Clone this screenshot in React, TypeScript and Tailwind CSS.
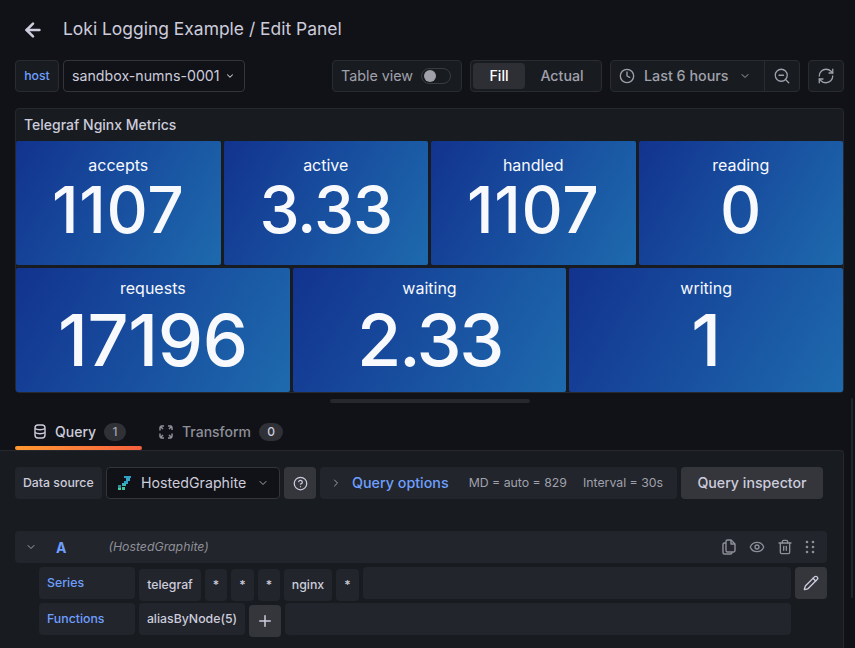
import React from "react";
import { ArrowLeft, ChevronDown, ChevronRight, Clock, ZoomOut, RefreshCw, HelpCircle, Eye, Trash2, Pencil, Plus } from "lucide-react";

function Tile({ label, value, big, track }: { label: string; value: string; big?: boolean; track?: string }) {
  return (
    <div className="flex-1 min-w-0 h-[124px] rounded-[2px] flex flex-col items-center bg-[linear-gradient(120deg,#12338f,#1e6aae)] text-[#f7f9fd]">
      <div className={big ? "text-[16px] leading-[20px] mt-[10px]" : "text-[16px] leading-[20px] mt-[14px]"}>{label}</div>
      <div className={`${big ? "text-[72px] leading-[72px] font-medium mt-[6px]" : "text-[64px] leading-[64px] font-medium mt-[3px]"} ${track ?? ""}`}>{value}</div>
    </div>
  );
}

function Seg({ children, w, blue }: { children?: React.ReactNode; w?: string; blue?: boolean }) {
  return <div className={`${w ?? ""} h-8 rounded-sm bg-[#22252b] flex items-center text-[12.3px] font-medium ${blue ? "text-[#6e9fff]" : "text-[#ccccdc]"}`}>{children}</div>;
}

function Chip({ children, cls }: { children: React.ReactNode; cls: string }) {
  return <div className={`${cls} h-8 mt-[2px] rounded-sm bg-[#22252b] flex items-center justify-center text-[12.3px] font-medium text-[#ccccdc]`}>{children}</div>;
}

export default function App() {
  return (
    <div className="w-[855px] h-[648px] overflow-hidden bg-[#111217] text-[#ccccdc] font-['Inter',sans-serif] flex flex-col">
      <div className="h-[60px] flex items-center pl-[22px] pb-[1px] shrink-0">
        <ArrowLeft className="w-[22px] h-[22px] text-[#ccccdc]" strokeWidth={2.8} />
        <div className="ml-[19px] text-[17.45px] text-[#ccccdc]">Loki Logging Example / Edit Panel</div>
      </div>

      <div className="h-8 flex pl-[15px] shrink-0">
        <div className="w-[44px] rounded-sm bg-[#181b1f] border border-[#2a2c32] flex items-center justify-center text-[12.3px] font-medium text-[#6e9fff]">host</div>
        <div className="ml-1 w-[182px] rounded-sm border border-[#33353b] flex items-center pl-2 text-[14.2px] text-[#ccccdc]">
          sandbox-numns-0001
          <ChevronDown className="w-[10px] h-[10px] ml-[5px]" strokeWidth={2.5} />
        </div>
        <div className="ml-[87px] w-[130px] rounded-sm bg-[#181b1f] border border-[#2a2c32] flex items-center pl-2 text-[14.3px] text-[#a0a1ad]">
          Table view
          <div className="ml-2 w-[30px] h-4 rounded-full border border-[#3a3c42] flex items-center pl-[2px]">
            <div className="w-[12px] h-[12px] rounded-full bg-[#9fa0aa]" />
          </div>
        </div>
        <div className="ml-[8px] w-[132px] rounded-sm bg-[#181b1f] border border-[#2a2c32] flex items-center p-[2px] text-[14.2px] font-medium">
          <div className="w-[52px] h-[26px] rounded-sm bg-[#2d2f35] flex items-center justify-center text-white">Fill</div>
          <div className="flex-1 text-center text-[#a0a1ad]">Actual</div>
        </div>
        <div className="ml-[8px] w-[155px] rounded-l-sm bg-[#181b1f] border border-[#2a2c32] flex items-center pl-2 text-[14.3px] font-medium text-[#a0a1ad]">
          <Clock className="w-4 h-4" />
          <span className="ml-[9px]">Last 6 hours</span>
          <ChevronDown className="w-3 h-3 ml-[11px]" />
        </div>
        <div className="w-[36px] -ml-px rounded-r-sm bg-[#181b1f] border border-[#2a2c32] flex items-center justify-center text-[#a0a1ad]">
          <ZoomOut className="w-[18px] h-[18px]" strokeWidth={1.7} />
        </div>
        <div className="ml-[8px] w-[36px] rounded-sm bg-[#181b1f] border border-[#2a2c32] flex items-center justify-center text-[#a0a1ad]">
          <RefreshCw className="w-[18px] h-[18px]" strokeWidth={1.7} />
        </div>
      </div>

      <div className="mt-[16px] ml-[15px] w-[829px] h-[285px] shrink-0 bg-[#181b1f] border border-[#26282e] rounded-sm flex flex-col">
        <div className="h-[32px] flex items-center pl-2 pb-[2px] text-[14px] font-medium text-[#ccccdc] shrink-0">Telegraf Nginx Metrics</div>
        <div className="flex gap-[3px]">
          <Tile label="accepts" value="1107" track="tracking-[0.7px]" />
          <Tile label="active" value="3.33" track="tracking-[-1px]" />
          <Tile label="handled" value="1107" track="tracking-[0.7px]" />
          <Tile label="reading" value="0" />
        </div>
        <div className="flex gap-[3px] mt-[3px]">
          <Tile label="requests" value="17196" big track="tracking-[-0.4px]" />
          <Tile label="waiting" value="2.33" big track="tracking-[-2.4px]" />
          <Tile label="writing" value="1" big />
        </div>
      </div>

      <div className="relative flex-1 min-h-0 flex flex-col">
        <div className="absolute left-[851px] top-[5px] w-[2px] h-[200px] rounded-sm bg-[#22252a]" />
        <div className="h-[4px] w-[200px] ml-[330px] mt-[6px] rounded-sm bg-[#26282d] shrink-0" />
        <div className="h-[47px] flex pl-[15px] shrink-0">
          <div className="w-[127px] h-[47px] relative flex items-center pl-[18px] pt-[10px] text-[14px] font-medium text-[#ccccdc]">
            <svg className="w-[14px] h-[15px] mr-[8px]" viewBox="0 0 14 15" fill="none" stroke="currentColor" strokeWidth="1.4">
              <rect x="2" y="1" width="10" height="13" rx="3" />
              <path d="M2 4.5c2 1.6 8 1.6 10 0M2 8.5c2 1.6 8 1.6 10 0" />
            </svg>
            Query
            <div className="ml-[8px] w-[22px] h-[18px] rounded-full bg-[#2f3137] text-[12px] flex items-center justify-center text-[#a0a1ad]">1</div>
            <div className="absolute left-0 right-0 bottom-0 h-[4px] rounded-sm bg-gradient-to-r from-[#ff9830] to-[#f55f3e]" />
          </div>
          <div className="ml-[17px] flex items-center pt-[10px] text-[14px] font-medium text-[#8e8f99]">
            <svg className="w-[14px] h-[14px] mr-[9px]" viewBox="0 0 14 14" fill="none" stroke="currentColor" strokeWidth="1.5">
              <path d="M1 5.5V2.5L2.5 1H5M9 1h3l1 1.5V5M13 8.5v3L11.5 13H9M5 13H2.5L1 11.5V8.5M1 1l3 3M13 1l-3 3M13 13l-3-3M1 13l3-3" />
            </svg>
            Transform
            <div className="ml-[8px] w-[24px] h-[18px] rounded-full bg-[#2f3137] text-[12px] flex items-center justify-center text-[#ccccdc]">0</div>
          </div>
        </div>

        <div className="ml-0 w-[844px] flex-1 bg-[#181b1f] border-t border-r border-[#26282e] rounded-tr-sm pt-[16px] pl-[15px]">
          <div className="flex h-8">
            <div className="w-[87px] rounded-sm bg-[#22252b] flex items-center pl-2 text-[12.3px] font-medium text-[#ccccdc]">Data source</div>
            <div className="ml-1 w-[174px] rounded-sm bg-[#111217] border border-[#33353b] flex items-center pl-[9px] text-[14.2px] text-[#ccccdc]">
              <svg className="w-[16px] h-[16px] mr-[9px] shrink-0" viewBox="0 0 16 16">
                <rect x="8" y="1" width="7" height="2" fill="#2f9fc4" />
                <rect x="10" y="3" width="4" height="3" fill="#37a6c9" />
                <rect x="8" y="6" width="4" height="3" fill="#2f9fc4" />
                <rect x="6" y="8" width="4" height="3" fill="#3bb6b6" />
                <rect x="2" y="10" width="3" height="3" fill="#2f8f96" />
                <rect x="6" y="12" width="3" height="3" fill="#45c4a4" />
                <rect x="2" y="13" width="3" height="2" fill="#3fd0a8" />
              </svg>
              HostedGraphite
              <ChevronDown className="w-3 h-3 ml-[11px] text-[#a0a1ad]" />
            </div>
            <div className="ml-1 w-8 rounded-sm bg-[#34363c] flex items-center justify-center">
              <HelpCircle className="w-[15px] h-[15px] text-[#ccccdc]" />
            </div>
            <div className="ml-1 w-[357px] rounded-sm bg-[#22252b] flex items-center pl-[10px] text-[12.3px]">
              <ChevronRight className="w-3 h-3 text-[#a0a1ad]" />
              <span className="ml-[10px] text-[14.3px] font-medium text-[#6e9fff]">Query options</span>
              <span className="ml-[20px] text-[#a0a1ad]">MD = auto = 829</span>
              <span className="ml-[16px] text-[#a0a1ad]">Interval = 30s</span>
            </div>
            <div className="ml-1 w-[142px] rounded-sm bg-[#34363c] flex items-center justify-center text-[14.2px] font-medium text-[#ccccdc]">Query inspector</div>
          </div>

          <div className="mt-[32px] w-[812px] h-8 rounded-sm bg-[#22252b] flex items-center pl-[10px] pr-[9px]">
            <ChevronDown className="w-3 h-3 text-[#a0a1ad]" />
            <span className="ml-[19px] text-[14px] font-bold text-[#6e9fff]">A</span>
            <span className="ml-[42px] text-[12.3px] italic text-[#8e8f99]">(HostedGraphite)</span>
            <div className="ml-auto flex text-[#8e8f99]">
              <svg className="w-4 h-4 mr-[12px]" viewBox="0 0 16 16" fill="none" stroke="currentColor" strokeWidth="1.4" strokeLinejoin="round">
                <path d="M5 2.5A1.5 1.5 0 0 1 6.5 1H10l4 4v6.5a1.5 1.5 0 0 1-1.5 1.5h-6A1.5 1.5 0 0 1 5 11.5z" />
                <path d="M10 1v4h4" />
                <path d="M5 4H3.5A1.5 1.5 0 0 0 2 5.5v8A1.5 1.5 0 0 0 3.5 15h6a1.5 1.5 0 0 0 1.5-1.5V13" />
              </svg>
              <Eye className="w-4 h-4 mr-[12px]" />
              <Trash2 className="w-4 h-4 mr-[9px]" />
              <svg className="w-4 h-4" viewBox="0 0 16 16" fill="currentColor">
                <circle cx="5" cy="3" r="1.3" />
                <circle cx="11" cy="3" r="1.3" />
                <circle cx="5" cy="8" r="1.3" />
                <circle cx="11" cy="8" r="1.3" />
                <circle cx="5" cy="13" r="1.3" />
                <circle cx="11" cy="13" r="1.3" />
              </svg>
            </div>
          </div>

          <div className="mt-1 ml-6 flex gap-1 h-8 w-[788px]">
            <Seg w="w-[96px] pl-2" blue>Series</Seg>
            <Chip cls="w-[62px]">telegraf</Chip>
            <Chip cls="w-[22px]">*</Chip>
            <Chip cls="w-[23px]">*</Chip>
            <Chip cls="w-[22px]">*</Chip>
            <Chip cls="w-[48px]">nginx</Chip>
            <Chip cls="w-[23px]">*</Chip>
            <Seg w="flex-1" />
            <div className="w-8 h-8 rounded-sm bg-[#34363c] flex items-center justify-center">
              <Pencil className="w-4 h-4 text-[#ccccdc]" />
            </div>
          </div>

          <div className="mt-1 ml-6 flex gap-1 h-8 w-[752px]">
            <Seg w="w-[96px] pl-2" blue>Functions</Seg>
            <Seg w="w-[106px] justify-center">aliasByNode(5)</Seg>
            <div className="w-8 h-8 mt-[2px] rounded-sm bg-[#34363c] flex items-center justify-center">
              <Plus className="w-[18px] h-[18px] text-[#ccccdc]" />
            </div>
            <Seg w="flex-1" />
          </div>
        </div>
      </div>
    </div>
  );
}
